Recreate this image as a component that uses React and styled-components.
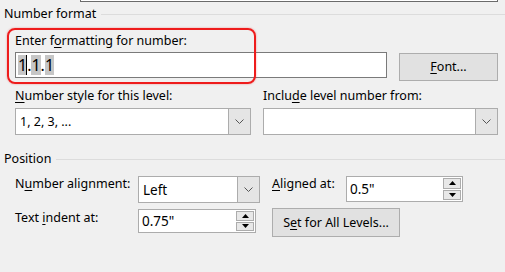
import React from "react";
import styled, { createGlobalStyle } from "styled-components";

const Global = createGlobalStyle`
  html, body { margin: 0; padding: 0; background: #f0f0f0; }
  body {
    font-family: "Noto Sans", "Liberation Sans", sans-serif;
    font-size: 12.5px;
    color: #000;
  }
`;

const Page = styled.div`
  position: relative;
  width: 505px;
  height: 272px;
  overflow: hidden;
  background: #f0f0f0;
  display: flex;
  flex-direction: column;
  line-height: 16px;
`;

const TopStub = styled.div`
  margin-left: 80px;
  width: 418px;
  height: 2px;
  box-sizing: border-box;
  border: 1px solid #6b6b6b;
  border-top: none;
  background: #fff;
`;

const GroupHeader = styled.div`
  display: flex;
  align-items: center;
  gap: 5px;
  margin-top: ${(p) => p.$top}px;
  padding-left: 4px;
  height: 16px;
  white-space: nowrap;
  &::after {
    content: "";
    flex: 1;
    height: 1px;
    background: #dcdcdc;
  }
`;

const Section = styled.div`
  display: flex;
  flex-direction: column;
  padding: 0 7px 0 15px;
`;

const Label = styled.div`
  height: 16px;
  white-space: nowrap;
  margin-top: ${(p) => p.$top || 0}px;
`;

const Key = styled.span`
  text-decoration: underline;
  text-underline-offset: 2px;
`;

const FieldRow = styled.div`
  display: flex;
  align-items: flex-start;
  gap: 12px;
  margin-top: 3px;
`;

const TextField = styled.div`
  width: 372px;
  height: 26px;
  box-sizing: border-box;
  border: 1px solid #7a7a7a;
  background: #fff;
  display: flex;
  align-items: center;
  padding-left: 2px;
  font-size: 16px;
`;

const Mark = styled.span`
  background: #c6c6c6;
  line-height: 20px;
  height: 20px;
  display: inline-block;
`;

const Plain = styled.span`
  line-height: 20px;
  display: inline-block;
`;

const Caret = styled.span`
  display: inline-block;
  width: 1px;
  height: 20px;
  background: #000;
  margin-left: -1px;
`;

const Button = styled.button`
  width: ${(p) => p.$w}px;
  height: ${(p) => p.$h}px;
  margin-top: ${(p) => p.$top || 0}px;
  box-sizing: border-box;
  background: #e1e1e1;
  border: 1px solid #adadad;
  font: inherit;
  line-height: 16px;
  color: #000;
  padding: 0;
  white-space: nowrap;
`;

const TwoCols = styled.div`
  display: grid;
  grid-template-columns: 236px 235px;
  column-gap: 12px;
  margin-top: 7px;
`;

const Col = styled.div`
  display: flex;
  flex-direction: column;
  gap: 4px;
`;

const Select = styled.div`
  width: ${(p) => p.$w}px;
  height: 27px;
  box-sizing: border-box;
  border: 1px solid #acacac;
  background: #fff;
  display: flex;
`;

const SelectValue = styled.div`
  flex: 1;
  padding-left: ${(p) => p.$pad || 4}px;
  display: flex;
  align-items: center;
  font-size: ${(p) => p.$size || 12.5}px;
`;

const DropButton = styled.div`
  width: 21px;
  background: #e5e5e5;
  border-left: 1px solid #acacac;
  display: flex;
  align-items: center;
  justify-content: center;
`;

const PosGrid = styled.div`
  display: grid;
  grid-template-columns: 123px 134px 74px 117px;
  grid-template-rows: 27px 29px;
  row-gap: 5px;
  margin-top: 9px;
  padding-left: 15px;
  align-items: start;
`;

const Cell = styled.div`
  margin-top: ${(p) => p.$top || 0}px;
  grid-column: ${(p) => p.$col || "auto"};
  white-space: nowrap;
`;

const Spin = styled.div`
  width: ${(p) => p.$w}px;
  height: ${(p) => p.$h}px;
  box-sizing: border-box;
  border: 1px solid #acacac;
  background: #fff;
  display: flex;
`;

const SpinButtons = styled.div`
  width: 20px;
  display: flex;
  flex-direction: column;
  padding: 1px;
  gap: 1px;
  box-sizing: border-box;
`;

const SpinBtn = styled.div`
  flex: 1;
  background: #e8e8e8;
  border: 1px solid #acacac;
  display: flex;
  align-items: center;
  justify-content: center;
`;

const RedFrame = styled.div`
  position: absolute;
  left: 7px;
  top: 28px;
  width: 249px;
  height: 56px;
  box-sizing: border-box;
  border: 2px solid #ee1c1c;
  border-radius: 8px;
  box-shadow: 0 0 2px rgba(240, 20, 20, 0.45);
  pointer-events: none;
`;

const Chevron = () => (
  <svg width="9" height="5" viewBox="0 0 9 5">
    <polyline points="0.5,0.5 4.5,4.5 8.5,0.5" fill="none" stroke="#555" strokeWidth="1" />
  </svg>
);

const Tri = ({ up }) => (
  <svg width="7" height="4" viewBox="0 0 7 4">
    <polygon points={up ? "0,4 7,4 3.5,0" : "0,0 7,0 3.5,4"} fill="#000" />
  </svg>
);

const SpinBox = ({ value, w, h }) => (
  <Spin $w={w} $h={h}>
    <SelectValue $pad={3} $size={13.5}>{value}</SelectValue>
    <SpinButtons>
      <SpinBtn><Tri up /></SpinBtn>
      <SpinBtn><Tri /></SpinBtn>
    </SpinButtons>
  </Spin>
);

export default function App() {
  return (
    <Page>
      <Global />
      <TopStub />
      <GroupHeader $top={4}>Number format</GroupHeader>
      <Section>
        <Label $top={11}>
          Enter f<Key>o</Key>rmatting for number:
        </Label>
        <FieldRow>
          <TextField>
            <Mark>1</Mark>
            <Caret />
            <Plain>.</Plain>
            <Mark>1</Mark>
            <Plain>.</Plain>
            <Mark>1</Mark>
          </TextField>
          <Button $w={99} $h={28} $top={1}>
            <Key>F</Key>ont...
          </Button>
        </FieldRow>
        <TwoCols>
          <Col>
            <Label>
              <Key>N</Key>umber style for this level:
            </Label>
            <Select $w={236}>
              <SelectValue>1, 2, 3, ...</SelectValue>
              <DropButton><Chevron /></DropButton>
            </Select>
          </Col>
          <Col>
            <Label>
              Inclu<Key>d</Key>e level number from:
            </Label>
            <Select $w={235}>
              <SelectValue />
              <DropButton><Chevron /></DropButton>
            </Select>
          </Col>
        </TwoCols>
      </Section>
      <GroupHeader $top={16}>Position</GroupHeader>
      <PosGrid>
        <Cell>
          N<Key>u</Key>mber alignment:
        </Cell>
        <Cell>
          <Select $w={122}>
            <SelectValue $size={13.5}>Left</SelectValue>
            <DropButton><Chevron /></DropButton>
          </Select>
        </Cell>
        <Cell>
          <Key>A</Key>ligned at:
        </Cell>
        <Cell>
          <SpinBox value={'0.5"'} w={117} h={26} />
        </Cell>
        <Cell $top={2}>
          Text <Key>i</Key>ndent at:
        </Cell>
        <Cell $top={1}>
          <SpinBox value={'0.75"'} w={118} h={24} />
        </Cell>
        <Cell $col="3 / 5">
          <Button $w={128} $h={29}>
            S<Key>e</Key>t for All Levels...
          </Button>
        </Cell>
      </PosGrid>
      <RedFrame />
    </Page>
  );
}
